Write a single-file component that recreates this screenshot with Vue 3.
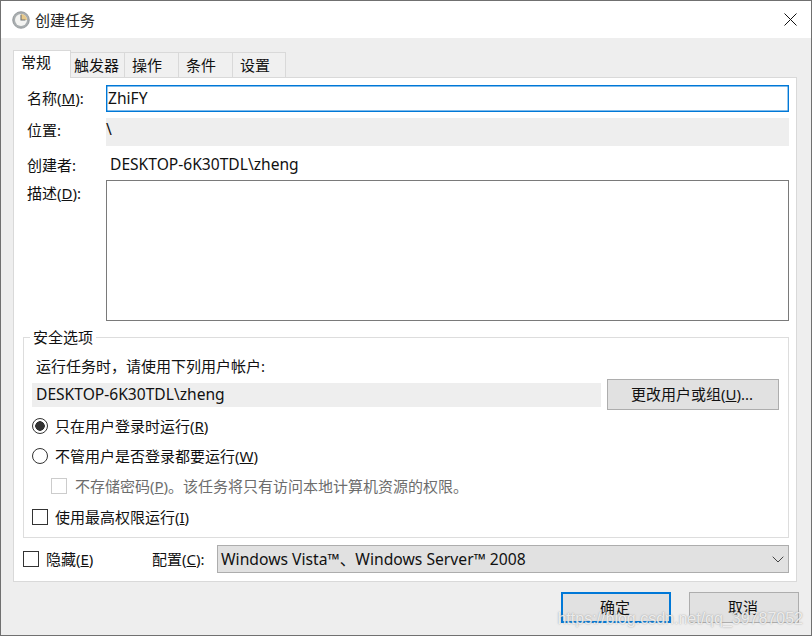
<script setup>
const tabs = [
  { label: '常规', active: true },
  { label: '触发器' },
  { label: '操作' },
  { label: '条件' },
  { label: '设置' },
]
</script>

<template>
  <div class="window">
    <header class="titlebar">
      <svg class="clock" width="18" height="18" viewBox="0 0 18 18" aria-hidden="true">
        <circle cx="9" cy="9" r="8.3" fill="#a9aeb0" stroke="#8b9093" stroke-width="0.8" />
        <circle cx="9" cy="9" r="6" fill="#f4f4f2" />
        <path d="M9 9V3A6 6 0 0 1 15 9Z" fill="#e8c98a" />
        <path d="M9 3.8V9H13.4" fill="none" stroke="#6d7275" stroke-width="1.1" />
      </svg>
      <span class="title">创建任务</span>
      <svg class="close" width="13" height="13" viewBox="0 0 13 13" aria-hidden="true">
        <path d="M.5.5l12 12M12.5.5l-12 12" fill="none" stroke="#111" stroke-width="1" />
      </svg>
    </header>

    <main class="body">
      <nav class="tabs">
        <div v-for="t in tabs" :key="t.label" class="tab" :class="{ active: t.active }">{{ t.label }}</div>
      </nav>

      <section class="panel">
        <div class="form">
          <div class="row name-row">
            <label class="label">名称(<u>M</u>):</label>
            <div class="input latin">ZhiFY</div>
          </div>
          <div class="row loc-row">
            <label class="label">位置:</label>
            <div class="readonly latin">\</div>
          </div>
          <div class="row author-row">
            <label class="label">创建者:</label>
            <div class="author latin">DESKTOP-6K30TDL\zheng</div>
          </div>
          <div class="row desc-row">
            <label class="label desc-label">描述(<u>D</u>):</label>
            <div class="textarea"></div>
          </div>
        </div>

        <div class="group">
          <span class="legend">安全选项</span>
          <div class="run-as">运行任务时，请使用下列用户帐户:</div>
          <div class="account-row">
            <div class="account latin">DESKTOP-6K30TDL\zheng</div>
            <button class="btn change">更改用户或组(<u>U</u>)...</button>
          </div>
          <div class="option first">
            <span class="radio checked"></span>
            <span class="opt-text">只在用户登录时运行(<u>R</u>)</span>
          </div>
          <div class="option second">
            <span class="radio"></span>
            <span class="opt-text">不管用户是否登录都要运行(<u>W</u>)</span>
          </div>
          <div class="option nested">
            <span class="check disabled"></span>
            <span class="opt-text muted">不存储密码(<u>P</u>)。该任务将只有访问本地计算机资源的权限。</span>
          </div>
          <div class="option highest">
            <span class="check"></span>
            <span class="opt-text">使用最高权限运行(<u>I</u>)</span>
          </div>
        </div>

        <div class="config-row">
          <span class="check"></span>
          <span class="hidden-label">隐藏(<u>E</u>)</span>
          <span class="config-label">配置(<u>C</u>):</span>
          <div class="combo">
            <span class="combo-text latin">Windows Vista™、Windows Server™ 2008</span>
            <svg width="12" height="7" viewBox="0 0 12 7" aria-hidden="true">
              <path d="M.7.7L6 6l5.3-5.3" fill="none" stroke="#444" stroke-width="1" />
            </svg>
          </div>
        </div>
      </section>

      <footer class="footer">
        <button class="btn action primary">确定</button>
        <button class="btn action">取消</button>
      </footer>
    </main>

    <div class="watermark">https://blog.csdn.net/qq_39787052</div>
  </div>
</template>

<style scoped>
.window {
  position: relative;
  box-sizing: border-box;
  width: 812px;
  height: 636px;
  overflow: hidden;
  display: flex;
  flex-direction: column;
  border: 1px solid #707070;
  background: #eeeeee;
  color: #111;
  font-family: "Noto Sans", "Noto Sans CJK SC", sans-serif;
  font-size: 15px;
}
.latin { font-size: 15.6px; }
.titlebar {
  height: 37px;
  flex: none;
  display: flex;
  align-items: center;
  background: #fff;
  padding: 0 14px 0 11px;
}
.clock { margin-right: 5px; }
.title { font-size: 15px; color: #222; padding-bottom: 1px; }
.close { margin-left: auto; }
.body {
  flex: 1;
  display: flex;
  flex-direction: column;
  padding: 12px 14px 0 12px;
}
.tabs {
  display: flex;
  align-items: flex-end;
  height: 27px;
  position: relative;
  z-index: 1;
}
.tab {
  box-sizing: border-box;
  width: 54px;
  height: 25px;
  padding-left: 3px;
  background: #f0f0f0;
  border: 1px solid #d9d9d9;
  border-left: none;
  border-bottom: none;
  line-height: 25px;
}
.tab:last-child { width: 53px; padding-left: 7px; }
.tab:nth-child(3), .tab:nth-child(4) { padding-left: 7px; }
.tab.active {
  width: 58px;
  height: 28px;
  margin-bottom: -1px;
  padding-left: 7px;
  background: #fff;
  border: 1px solid #d9d9d9;
  border-bottom: none;
  line-height: 22px;
}
.panel {
  box-sizing: border-box;
  height: 505px;
  background: #fff;
  border: 1px solid #d9d9d9;
  padding: 7px 7px 0 9px;
}
.form { padding-left: 4px; }
.row { display: flex; }
.label { width: 79px; flex: none; }
.name-row { height: 27px; align-items: center; }
.name-row .label { padding-bottom: 2px; }
.input {
  flex: 1;
  box-sizing: border-box;
  height: 27px;
  border: 1px solid #0078d7;
  box-shadow: inset 0 0 0 0.4px #0078d7;
  padding-left: 1px;
  line-height: 24px;
}
.loc-row { height: 28px; margin-top: 6px; align-items: flex-start; }
.loc-row .label { line-height: 24px; }
.readonly {
  flex: 1;
  height: 28px;
  background: #eeeeee;
  line-height: 23px;
}
.author-row { height: 34px; align-items: center; box-sizing: border-box; padding-top: 2px; }
.author { padding-left: 4px; }
.desc-row { height: 141px; }
.desc-label { padding-top: 2px; }
.textarea {
  flex: 1;
  box-sizing: border-box;
  border: 1px solid #7a7a7a;
  background: #fff;
}
.group {
  position: relative;
  box-sizing: border-box;
  height: 201px;
  margin-top: 16px;
  border: 1px solid #dddddd;
  padding: 0 9px 0 8px;
}
.legend {
  position: absolute;
  left: 6px;
  top: -11px;
  background: #fff;
  padding: 0 3px;
  line-height: 20px;
}
.run-as { padding: 18px 0 0 4px; line-height: 21px; height: 21px; }
.account-row {
  display: flex;
  align-items: center;
  justify-content: space-between;
  margin-top: 2px;
  height: 31px;
}
.account {
  box-sizing: border-box;
  width: 569px;
  height: 24px;
  background: #eeeeee;
  padding-left: 4px;
  line-height: 23px;
}
.btn {
  box-sizing: border-box;
  background: #e1e1e1;
  border: 1.5px solid #adadad;
  color: #111;
  font: inherit;
  padding: 0 0 2px;
}
.change { width: 172px; height: 31px; padding-right: 2px; }
.option { display: flex; align-items: center; gap: 7px; height: 20px; }
.opt-text { position: relative; top: -1px; }
.first { margin-top: 6px; }
.second { margin-top: 10px; }
.nested { margin-top: 10px; padding-left: 19px; gap: 8px; }
.highest { margin-top: 11px; }
.radio {
  box-sizing: border-box;
  width: 16px;
  height: 16px;
  flex: none;
  border: 1px solid #333;
  border-radius: 50%;
  background: #fff;
}
.radio.checked { background: radial-gradient(circle, #333 0 4.5px, #fff 5px); }
.check {
  box-sizing: border-box;
  width: 16px;
  height: 16px;
  flex: none;
  border: 1px solid #333;
  background: #fff;
}
.check.disabled { border-color: #cccccc; }
.muted { color: #6d6d6d; }
.config-row {
  display: flex;
  align-items: center;
  height: 28px;
  margin-top: 7px;
}
.hidden-label { margin-left: 7px; width: 106px; padding-bottom: 2px; }
.config-label { width: 65px; padding-bottom: 2px; }
.combo {
  flex: 1;
  box-sizing: border-box;
  height: 28px;
  display: flex;
  align-items: center;
  justify-content: space-between;
  background: #e1e1e1;
  border: 1px solid #adadad;
  padding: 0 4px 0 3px;
}
.combo-text { padding-bottom: 2px; font-size: 15.7px; }
.footer {
  display: flex;
  justify-content: flex-end;
  gap: 18px;
  margin: 10px -2px 0 0;
}
.action { width: 110px; height: 31px; padding-right: 2px; }
.primary { border: 2px solid #0078d7; }
.watermark {
  position: absolute;
  right: 8px;
  bottom: 7px;
  color: rgba(255, 255, 255, 0.8);
  text-shadow: 0 0 1.5px rgba(120, 120, 120, 0.8);
  font-family: "Liberation Sans", sans-serif;
  font-size: 16px;
  white-space: nowrap;
  pointer-events: none;
}
</style>
